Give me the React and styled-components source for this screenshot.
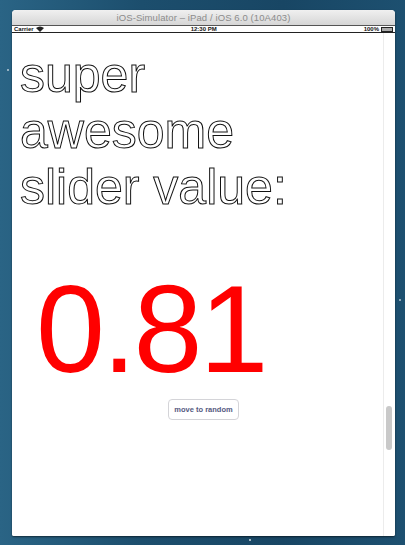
import React from "react";
import styled, { createGlobalStyle } from "styled-components";

const GlobalStyle = createGlobalStyle`
  html, body { margin: 0; padding: 0; }
  body {
    width: 405px;
    height: 545px;
    overflow: hidden;
    background:
      radial-gradient(circle at 8px 70px, rgba(255,255,255,0.5) 0 1px, transparent 1.5px),
      radial-gradient(circle at 250px 540px, rgba(255,255,255,0.6) 0 1px, transparent 1.5px),
      radial-gradient(circle at 400px 300px, rgba(255,255,255,0.5) 0 1px, transparent 1.5px),
      linear-gradient(90deg, #2a6485 0%, #1c4e6d 35%, #184664 70%, #1d5070 100%);
    font-family: "Liberation Sans", Arial, sans-serif;
  }
`;

const Desktop = styled.div`
  width: 405px;
  height: 545px;
  box-sizing: border-box;
  padding: 10px 10px 0 12px;
`;

const Window = styled.div`
  width: 383px;
  height: 526px;
  display: flex;
  flex-direction: column;
  border-radius: 4px 4px 2px 2px;
  overflow: hidden;
  box-shadow: 0 1px 2px rgba(0, 0, 0, 0.55);
  background: #fff;
`;

const TitleBar = styled.div`
  height: 15px;
  display: flex;
  align-items: center;
  justify-content: center;
  background: linear-gradient(#f0f0f0, #d6d6d6);
  border-bottom: 1px solid #555;
  font-size: 9.5px;
  color: #8c8c8c;
  letter-spacing: 0.1px;
`;

const StatusBar = styled.div`
  height: 6px;
  display: flex;
  align-items: center;
  justify-content: space-between;
  padding: 0 2px;
  background: #fff;
  border-bottom: 1px solid #222;
  font-size: 6px;
  font-weight: bold;
  color: #111;
  line-height: 6px;
`;

const StatusGroup = styled.div`
  display: flex;
  align-items: center;
  gap: 2px;
`;

const Battery = styled.div`
  width: 10px;
  height: 3px;
  border: 1px solid #222;
  background: #aaa;
`;

const Content = styled.div`
  flex: 1;
  position: relative;
  display: flex;
  flex-direction: column;
  background: #fff;
`;

const Heading = styled.div`
  margin: 14px 0 0 8px;
  font-size: 50px;
  line-height: 56px;
  color: #fff;
  -webkit-text-stroke: 1px #111;
`;

const Value = styled.div`
  margin: 52px 0 0 24px;
  font-size: 124px;
  line-height: 124px;
  letter-spacing: -3px;
  color: #ff0000;
`;

const ButtonRow = styled.div`
  display: flex;
  justify-content: center;
  margin-top: 8px;
`;

const Button = styled.button`
  width: 71px;
  height: 21px;
  padding: 0;
  border: 1px solid #d4d4d8;
  border-radius: 4px;
  background: #fff;
  font-family: "Liberation Sans", Arial, sans-serif;
  font-size: 7.5px;
  font-weight: bold;
  color: #55597f;
`;

const ScrollTrack = styled.div`
  position: absolute;
  top: 0;
  right: 0;
  bottom: 0;
  width: 11px;
  border-left: 1px solid #ececec;
`;

const ScrollThumb = styled.div`
  position: absolute;
  top: 373px;
  left: 2px;
  width: 6px;
  height: 44px;
  border-radius: 3px;
  background: #c9c9c9;
`;

function Wifi() {
  return (
    <svg width="8" height="6" viewBox="0 0 8 6">
      <path d="M0 2 Q4 -1 8 2 L4 6 Z" fill="#222" />
    </svg>
  );
}

export default function App() {
  return (
    <>
      <GlobalStyle />
      <Desktop>
        <Window>
          <TitleBar>iOS-Simulator – iPad / iOS 6.0 (10A403)</TitleBar>
          <StatusBar>
            <StatusGroup>
              <span>Carrier</span>
              <Wifi />
            </StatusGroup>
            <span>12:30 PM</span>
            <StatusGroup>
              <span>100%</span>
              <Battery />
            </StatusGroup>
          </StatusBar>
          <Content>
            <Heading>
              super
              <br />
              awesome
              <br />
              slider value:
            </Heading>
            <Value>0.81</Value>
            <ButtonRow>
              <Button>move to random</Button>
            </ButtonRow>
            <ScrollTrack>
              <ScrollThumb />
            </ScrollTrack>
          </Content>
        </Window>
      </Desktop>
    </>
  );
}
